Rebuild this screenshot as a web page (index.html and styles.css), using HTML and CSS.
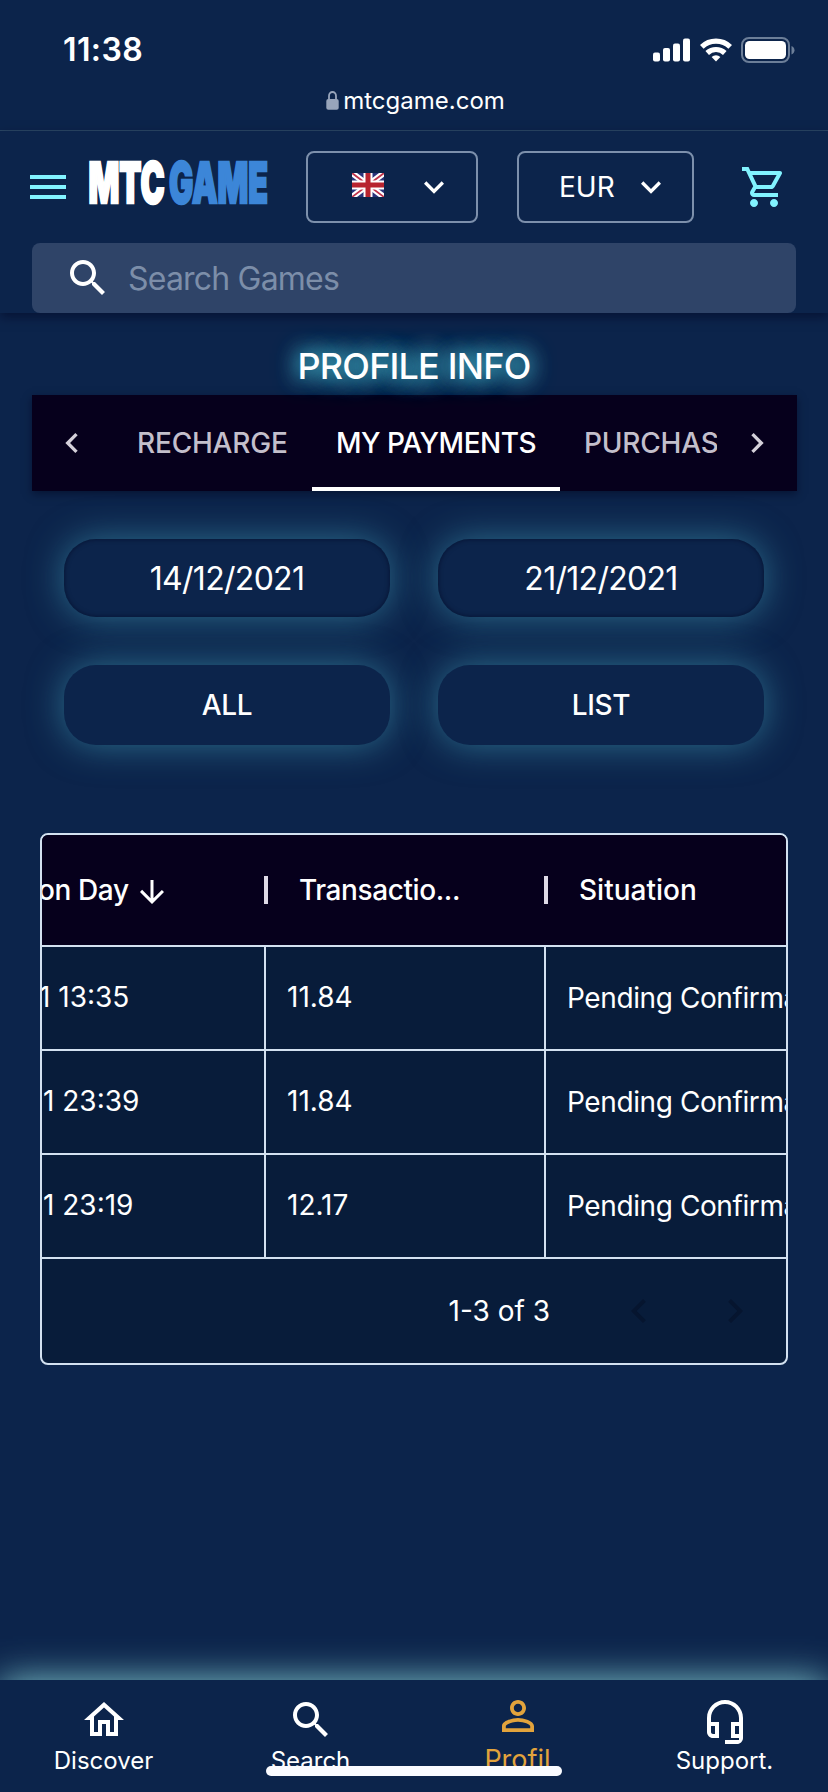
FILE: index.html
```html
<!DOCTYPE html>
<html lang="en">
<head>
    <meta charset="UTF-8">
    <meta name="viewport" content="width=device-width, initial-scale=1.0">
    <title>MTCGAME - Profile Info</title>
    <link rel="stylesheet" href="styles.css">
</head>
<body>
    <div class="browser-bar">
        <div class="status-bar">
            <span class="clock">11:38</span>
            <svg class="signal" width="38" height="24" viewBox="0 0 38 24" fill="#fff">
                <rect x="0" y="14.5" width="7" height="9" rx="2"/>
                <rect x="10" y="10" width="7" height="13.5" rx="2"/>
                <rect x="20" y="5.5" width="7" height="18" rx="2"/>
                <rect x="30" y="0.5" width="7" height="23" rx="2"/>
            </svg>
            <svg class="wifi" width="32" height="24" viewBox="0 0 32 24" fill="none" stroke="#fff" stroke-width="5.2">
                <path d="M1.8 8.8a20.4 20.4 0 0 1 28.4 0"/>
                <path d="M7.2 15a12.8 12.8 0 0 1 17.6 0"/>
                <path d="M16 23.6l-4.4-4.5a6.4 6.4 0 0 1 8.8 0z" fill="#fff" stroke="none"/>
            </svg>
            <svg class="battery" width="54" height="26" viewBox="0 0 54 26">
                <rect x="1" y="1" width="47" height="24" rx="7" fill="none" stroke="#6c7e98" stroke-width="2"/>
                <rect x="4" y="4" width="41" height="18" rx="4.5" fill="#fff"/>
                <path d="M50.5 9v8.5c2-.8 3-2.4 3-4.25s-1-3.45-3-4.25z" fill="#6c7e98"/>
            </svg>
        </div>
        <div class="url">
            <svg width="13" height="19" viewBox="0 0 13 19">
                <path d="M3 9V5a3.5 4 0 0 1 7 0v4" fill="none" stroke="#98a5bb" stroke-width="1.8"/>
                <rect x="0.3" y="8" width="12.4" height="10.7" rx="2" fill="#98a5bb"/>
            </svg>
            <span>mtcgame.com</span>
        </div>
    </div>

    <header class="header">
        <div class="toolbar">
            <svg class="menu-icon" width="48" height="48" viewBox="0 0 24 24" fill="#82f3ff"><path d="M3 18h18v-2H3v2zm0-5h18v-2H3v2zm0-7v2h18V6H3z"/></svg>
            <svg class="logo" width="182" height="46" viewBox="0 0 182 46">
                <text class="logo-mtc" x="1.5" y="44" textLength="76" lengthAdjust="spacingAndGlyphs">MTC</text>
                <text class="logo-game" x="82" y="44" textLength="99" lengthAdjust="spacingAndGlyphs">GAME</text>
            </svg>
            <div class="select select-lang">
                <svg class="flag" width="32" height="24" viewBox="0 0 32 24">
                    <rect width="32" height="24" fill="#29337a"/>
                    <path d="M0 0l32 24M32 0L0 24" stroke="#fff" stroke-width="6"/>
                    <path d="M0 0l32 24M32 0L0 24" stroke="#c0334a" stroke-width="1.8"/>
                    <path d="M16 0v24M0 12h32" stroke="#fff" stroke-width="9"/>
                    <path d="M16 0v24M0 12h32" stroke="#b8242f" stroke-width="5"/>
                </svg>
                <svg width="40" height="40" viewBox="0 0 24 24" fill="#fff"><path d="M7.41 8.59 12 13.17l4.59-4.58L18 10l-6 6-6-6 1.41-1.41z"/></svg>
            </div>
            <div class="select select-currency">
                <span>EUR</span>
                <svg width="40" height="40" viewBox="0 0 24 24" fill="#fff"><path d="M7.41 8.59 12 13.17l4.59-4.58L18 10l-6 6-6-6 1.41-1.41z"/></svg>
            </div>
            <svg class="cart-icon" width="48" height="48" viewBox="0 0 24 24" fill="#82f3ff"><path d="M15.55 13c.75 0 1.41-.41 1.75-1.03l3.58-6.49c.37-.66-.11-1.48-.87-1.48H5.21l-.94-2H1v2h2l3.6 7.59-1.35 2.44C4.52 15.37 5.48 17 7 17h12v-2H7l1.1-2h7.45zM6.16 6h12.15l-2.76 5H8.53L6.16 6zM7 18c-1.1 0-1.99.9-1.99 2S5.9 22 7 22s2-.9 2-2-.9-2-2-2zm10 0c-1.1 0-1.99.9-1.99 2s.89 2 1.99 2 2-.9 2-2-.9-2-2-2z"/></svg>
        </div>
        <div class="search-box">
            <svg width="48" height="48" viewBox="0 0 24 24" fill="#fff"><path d="M15.5 14h-.79l-.28-.27C15.41 12.59 16 11.11 16 9.5 16 5.91 13.09 3 9.5 3S3 5.91 3 9.5 5.91 16 9.5 16c1.61 0 3.09-.59 4.23-1.57l.27.28v.79l5 4.99L20.49 19l-4.99-5zm-6 0C7.01 14 5 11.99 5 9.5S7.01 5 9.5 5 14 7.01 14 9.5 11.99 14 9.5 14z"/></svg>
            <span>Search Games</span>
        </div>
    </header>

    <main class="content">
        <h1 class="title">PROFILE INFO</h1>

        <div class="tabs">
            <div class="tab-scroll">
                <svg width="40" height="40" viewBox="0 0 24 24" fill="#d4d0da"><path d="M15.41 16.59 10.83 12l4.58-4.59L14 6l-6 6 6 6z"/></svg>
            </div>
            <div class="tab-list">
                <div class="tab tab-recharge">RECHARGE</div>
                <div class="tab tab-payments active">MY PAYMENTS</div>
                <div class="tab">PURCHASE</div>
            </div>
            <div class="tab-scroll">
                <svg width="40" height="40" viewBox="0 0 24 24" fill="#d4d0da"><path d="M8.59 16.59 13.17 12 8.59 7.41 10 6l6 6-6 6z"/></svg>
            </div>
        </div>

        <div class="filters">
            <div class="pill date">14/12/2021</div>
            <div class="pill date">21/12/2021</div>
            <div class="pill">ALL</div>
            <div class="pill">LIST</div>
        </div>

        <div class="grid">
            <div class="grid-head">
                <div class="head-cell head-day">
                    <span>on Day</span>
                    <svg width="36" height="36" viewBox="0 0 24 24" fill="#fff"><path d="m20 12-1.41-1.41L13 16.17V4h-2v12.17l-5.58-5.59L4 12l8 8 8-8z"/></svg>
                </div>
                <div class="head-cell"><span>Transactio...</span></div>
                <div class="head-cell head-situation"><span>Situation</span></div>
            </div>
            <div class="grid-row">
                <div class="cell cell-day day-1">1 13:35</div>
                <div class="cell">11.84</div>
                <div class="cell cell-status">Pending Confirmation</div>
            </div>
            <div class="grid-row">
                <div class="cell cell-day day-2">1 23:39</div>
                <div class="cell">11.84</div>
                <div class="cell cell-status">Pending Confirmation</div>
            </div>
            <div class="grid-row">
                <div class="cell cell-day day-2">1 23:19</div>
                <div class="cell">12.17</div>
                <div class="cell cell-status">Pending Confirmation</div>
            </div>
            <div class="grid-footer">
                <span class="range">1-3 of 3</span>
                <svg width="48" height="48" viewBox="0 0 24 24" fill="#06152f"><path d="M15.41 16.59 10.83 12l4.58-4.59L14 6l-6 6 6 6z"/></svg>
                <svg width="48" height="48" viewBox="0 0 24 24" fill="#06152f"><path d="M8.59 16.59 13.17 12 8.59 7.41 10 6l6 6-6 6z"/></svg>
            </div>
        </div>
    </main>

    <nav class="bottom-nav">
        <div class="nav-item">
            <svg width="48" height="48" viewBox="0 0 24 24" fill="#fff"><path d="m12 5.69 5 4.5V18h-2v-6H9v6H7v-7.81l5-4.5M12 3 2 12h3v8h6v-6h2v6h6v-8h3L12 3z"/></svg>
            <span>Discover</span>
        </div>
        <div class="nav-item">
            <svg width="48" height="48" viewBox="0 0 24 24" fill="#fff"><path d="M15.5 14h-.79l-.28-.27C15.41 12.59 16 11.11 16 9.5 16 5.91 13.09 3 9.5 3S3 5.91 3 9.5 5.91 16 9.5 16c1.61 0 3.09-.59 4.23-1.57l.27.28v.79l5 4.99L20.49 19l-4.99-5zm-6 0C7.01 14 5 11.99 5 9.5S7.01 5 9.5 5 14 7.01 14 9.5 11.99 14 9.5 14z"/></svg>
            <span>Search</span>
        </div>
        <div class="nav-item selected">
            <svg width="48" height="48" viewBox="0 0 24 24" fill="#e2a33c"><path d="M12 5.9c1.16 0 2.1.94 2.1 2.1s-.94 2.1-2.1 2.1S9.9 9.16 9.9 8s.94-2.1 2.1-2.1m0 9c2.97 0 6.1 1.46 6.1 2.1v1.1H5.9V17c0-.64 3.13-2.1 6.1-2.1M12 4C9.79 4 8 5.79 8 8s1.79 4 4 4 4-1.79 4-4-1.79-4-4-4zm0 9c-2.67 0-8 1.34-8 4v3h16v-3c0-2.66-5.33-4-8-4z"/></svg>
            <span>Profil</span>
        </div>
        <div class="nav-item support">
            <svg width="48" height="48" viewBox="0 0 24 24" fill="#fff"><path d="M12 1c-4.97 0-9 4.03-9 9v7c0 1.66 1.34 3 3 3h3v-8H5v-2c0-3.87 3.13-7 7-7s7 3.13 7 7v2h-4v8h4v1h-7v2h6c1.66 0 3-1.34 3-3V10c0-4.97-4.03-9-9-9zM7 14v4H6c-.55 0-1-.45-1-1v-3h2zm12 4h-2v-4h2v4z"/></svg>
            <span>Support.</span>
        </div>
        <div class="home-indicator"></div>
    </nav>
</body>
</html>
```
FILE: styles.css
```css
* {
    margin: 0;
    padding: 0;
    box-sizing: border-box;
}

body {
    width: 828px;
    height: 1792px;
    display: flex;
    flex-direction: column;
    overflow: hidden;
    font-family: Inter, Roboto, sans-serif;
    font-size: 28px;
    background: #0c244b;
    color: white;
    white-space: nowrap;
}

svg {
    display: block;
    flex-shrink: 0;
}

.browser-bar {
    height: 131px;
    border-bottom: 1px solid #2b4865;
}

.status-bar {
    display: flex;
    align-items: center;
    height: 74px;
    padding: 25px 33px 0 63px;
}

.clock {
    flex: 1;
    font-size: 32px;
    font-weight: 600;
    letter-spacing: 0.4px;
}

.wifi {
    margin: 0 9px 0 9px;
}

.url {
    display: flex;
    align-items: center;
    justify-content: center;
    gap: 4px;
    height: 52px;
    padding-left: 3px;
    font-size: 24px;
}

.header {
    height: 182px;
    padding-top: 20px;
    box-shadow: 0 4px 10px rgba(0, 5, 35, 0.55);
}

.toolbar {
    display: flex;
    height: 92px;
    padding-left: 24px;
}

.menu-icon {
    margin-top: 12px;
}

.logo {
    margin: 8px 0 0 15px;
    overflow: visible;
}

.logo text {
    font-family: Inter, sans-serif;
    font-size: 56px;
    font-weight: 900;
    stroke-width: 2.6px;
}

.logo-mtc {
    fill: white;
    stroke: white;
}

.logo-game {
    fill: #3c86d8;
    stroke: #3c86d8;
}

.select {
    display: flex;
    align-items: center;
    height: 72px;
    border: 2px solid #7d90ac;
    border-radius: 8px;
}

.select-lang {
    width: 172px;
    margin-left: 37px;
    padding-left: 44px;
    gap: 30px;
}

.flag {
    margin-bottom: 4px;
}

.select-currency {
    width: 177px;
    margin-left: 39px;
    padding-left: 40px;
    gap: 16px;
}

.cart-icon {
    margin: 12px 0 0 46px;
}

.search-box {
    display: flex;
    align-items: center;
    gap: 16px;
    width: 764px;
    height: 70px;
    margin-left: 32px;
    padding-left: 32px;
    border-radius: 8px;
    background: #2f4468;
    color: #7c8ea9;
    font-size: 32px;
    letter-spacing: -0.8px;
}

.content {
    flex: 1;
    padding: 34px 32px 0;
}

.title {
    height: 48px;
    line-height: 39px;
    text-align: center;
    font-size: 36px;
    font-weight: 500;
    letter-spacing: -0.8px;
    text-shadow: 0 0 20px #3fa3bb, 0 0 22px #3fa3bb, 0 0 26px #2f8ba5;
}

.tabs {
    display: flex;
    width: 765px;
    height: 96px;
    background: #06001c;
    box-shadow: 0 3px 8px rgba(0, 5, 30, 0.5);
}

.tab-scroll {
    display: flex;
    align-items: center;
    justify-content: center;
    width: 80px;
}

.tab-list {
    display: flex;
    flex: 1;
    overflow: hidden;
}

.tab {
    flex-shrink: 0;
    padding: 0 24px;
    line-height: 96px;
    font-weight: 500;
    letter-spacing: -0.2px;
    color: #c3bfcb;
}

.tab-recharge {
    width: 200px;
    padding-left: 25px;
}

.tab-payments {
    width: 248px;
    letter-spacing: -0.5px;
}

.tab.active {
    color: white;
    border-bottom: 4px solid white;
}

.filters {
    display: grid;
    grid-template-columns: 326px 326px;
    grid-template-rows: 78px 80px;
    gap: 48px;
    padding: 48px 32px 88px;
}

.pill {
    display: flex;
    align-items: center;
    justify-content: center;
    border-radius: 32px;
    background: #0c244b;
    font-weight: 500;
    letter-spacing: -0.3px;
    box-shadow: 0 0 36px rgba(67, 160, 185, 0.6);
}

.pill.date {
    padding-top: 1px;
    font-size: 32px;
    font-weight: 400;
    letter-spacing: -0.7px;
    box-shadow: 0 0 36px rgba(67, 160, 185, 0.6), inset 0 0 5px rgba(0, 5, 30, 0.6);
}

.grid {
    width: 748px;
    height: 532px;
    margin-left: 8px;
    border: 2px solid #d3e1f0;
    border-radius: 8px;
    overflow: hidden;
    background: #081c3a;
}

.grid-head,
.grid-row {
    display: grid;
    grid-template-columns: 224px 280px 240px;
    border-bottom: 2px solid #d3e1f0;
}

.grid-head {
    height: 112px;
    background: #06001c;
    font-weight: 500;
}

.head-cell {
    display: flex;
    align-items: center;
    letter-spacing: -0.4px;
}

.head-cell + .head-cell::before {
    content: "";
    width: 4px;
    height: 28px;
    margin-right: 31px;
    margin-left: -2px;
    background: #dedae6;
}

.head-situation {
    letter-spacing: 0;
}

.head-day {
    gap: 5px;
}

.head-day span {
    margin-left: -4px;
}

.head-day svg {
    margin-top: 4px;
}

.grid-row {
    height: 104px;
}

.cell {
    overflow: hidden;
    padding-left: 21px;
    line-height: 101px;
    border-right: 2px solid #d3e1f0;
}

.cell:last-child {
    border-right: none;
}

.cell-status {
    padding-top: 1px;
    letter-spacing: -0.4px;
}

.day-1 {
    padding-left: 0;
    text-indent: -3px;
}

.day-2 {
    padding-left: 1px;
}

.grid-footer {
    display: flex;
    align-items: center;
    justify-content: flex-end;
    height: 104px;
    padding-right: 27px;
}

.range {
    margin-right: 65px;
}

.grid-footer svg + svg {
    margin-left: 48px;
}

.bottom-nav {
    position: relative;
    display: grid;
    grid-template-columns: repeat(4, 1fr);
    height: 112px;
    background: #0c244b;
    box-shadow: 0 0 36px #82c8cd;
}

.nav-item {
    display: flex;
    flex-direction: column;
    align-items: center;
    padding-top: 16px;
    font-size: 24px;
    line-height: 34px;
}

.selected {
    padding-top: 12px;
    font-size: 27px;
    line-height: 39px;
    color: #e2a33c;
}

.support {
    padding-top: 18px;
    line-height: 30px;
}

/* drawn by the system on top of the nav labels */
.home-indicator {
    position: absolute;
    left: 266px;
    bottom: 16px;
    width: 296px;
    height: 10px;
    border-radius: 5px;
    background: #fafbff;
}
```
